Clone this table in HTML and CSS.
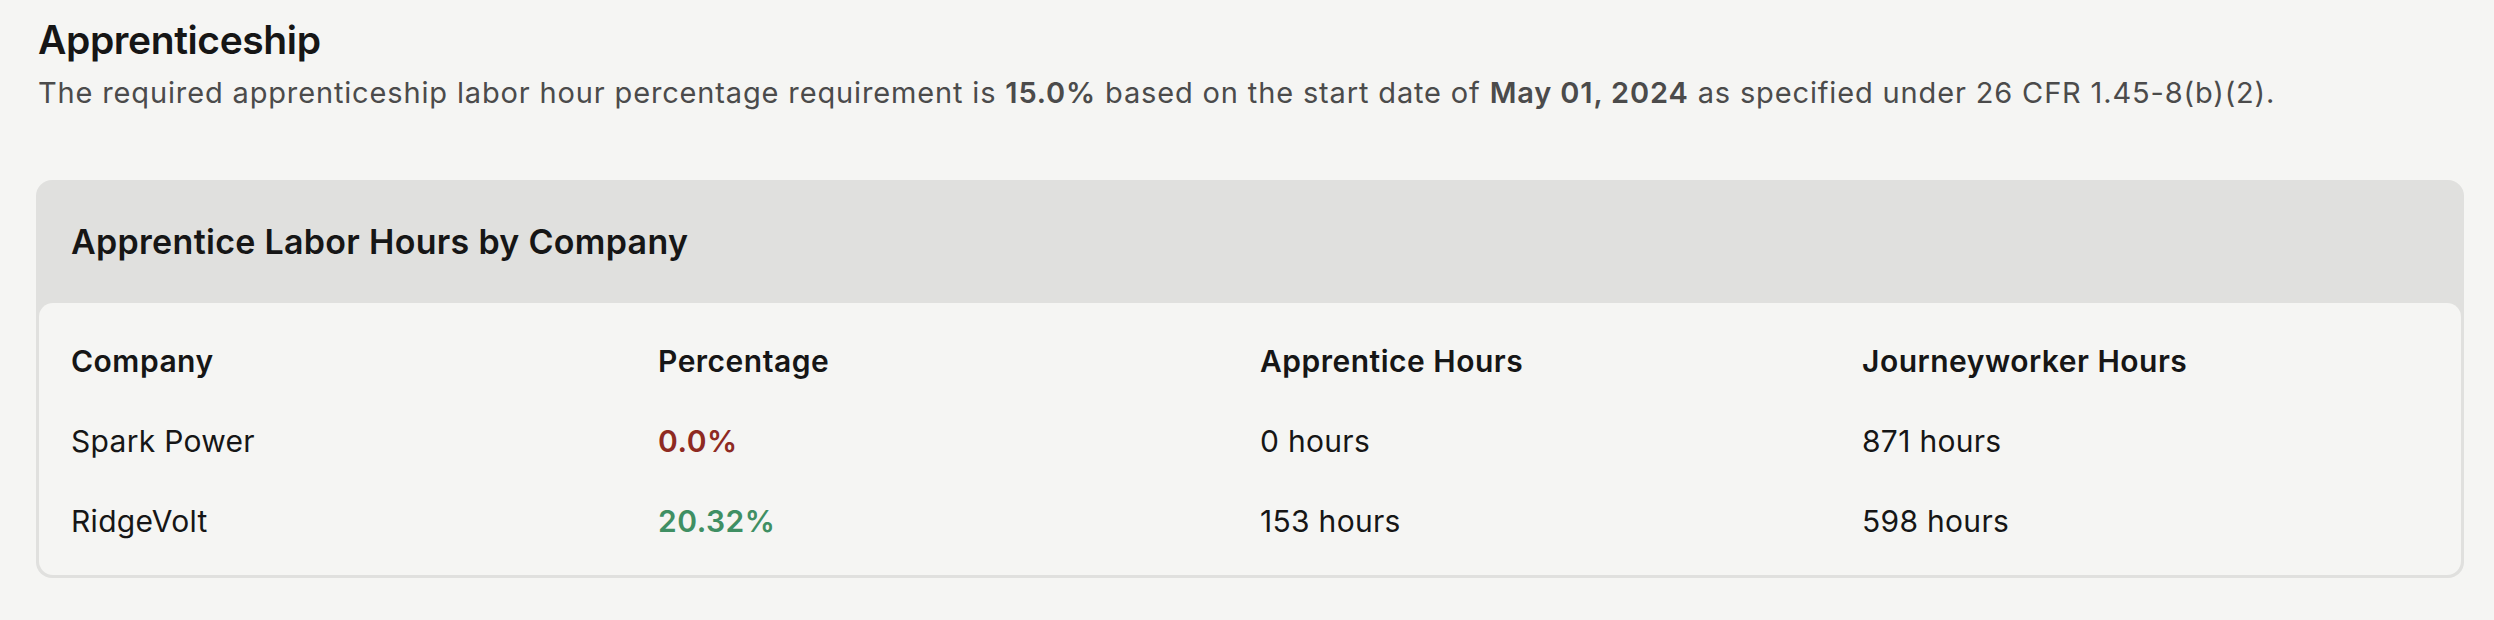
FILE: index.html
```html
<!DOCTYPE html>
<html lang="en">
<head>
    <meta charset="UTF-8">
    <meta name="viewport" content="width=device-width, initial-scale=1.0">
    <title>Apprenticeship</title>
    <link rel="stylesheet" href="styles.css">
</head>
<body>
    <h2 class="page-title">Apprenticeship</h2>
    <p class="intro">
        The required apprenticeship labor hour percentage requirement is <b>15.0%</b> based on the start date of <b>May 01, 2024</b> as specified under 26 CFR 1.45-8(b)(2).
    </p>

    <div class="card">
        <div class="card-header">
            <h3>Apprentice Labor Hours by Company</h3>
        </div>
        <div class="card-body">
            <div class="row head">
                <div>Company</div>
                <div>Percentage</div>
                <div>Apprentice Hours</div>
                <div>Journeyworker Hours</div>
            </div>
            <div class="row">
                <div>Spark Power</div>
                <div class="pct low">0.0%</div>
                <div>0 hours</div>
                <div>871 hours</div>
            </div>
            <div class="row">
                <div>RidgeVolt</div>
                <div class="pct ok">20.32%</div>
                <div>153 hours</div>
                <div>598 hours</div>
            </div>
        </div>
    </div>
</body>
</html>
```

FILE: styles.css
```css
body {
    font-family: Inter, "Noto Sans", sans-serif;
    background-color: #f5f5f3;
    color: #161616;
    margin: 0;
    padding: 15px 30px 0 38px;
}
.page-title {
    font-size: 39px;
    font-weight: 600;
    letter-spacing: -0.4px;
    margin: 0;
    line-height: 50px;
}
.intro {
    font-size: 29px;
    letter-spacing: 0.85px;
    color: #4b4b4b;
    margin: 8px 0 0;
    line-height: 40px;
}
.intro b {
    font-weight: 600;
}
.card {
    margin-top: 67px;
    margin-left: -2px;
    background-color: #e0e0de;
    border-radius: 16px;
    padding: 0 3px 3px;
}
.card-header {
    height: 123px;
    display: flex;
    align-items: center;
    padding-left: 32px;
}
.card-header h3 {
    margin: 0;
    font-size: 34px;
    font-weight: 600;
    letter-spacing: 0.3px;
}
.card-body {
    background-color: #f5f5f3;
    border-radius: 14px;
    padding: 18px 32px 14px;
}
.row {
    display: grid;
    grid-template-columns: 587px 602px 602px 1fr;
    height: 80px;
    align-items: center;
    font-size: 30px;
    letter-spacing: 0.3px;
}
.row.head {
    font-weight: 600;
    letter-spacing: 0.5px;
}
.pct {
    font-weight: 600;
    letter-spacing: 0.5px;
}
.pct.low {
    color: #8e2a22;
}
.pct.ok {
    color: #3f8f63;
}
```
